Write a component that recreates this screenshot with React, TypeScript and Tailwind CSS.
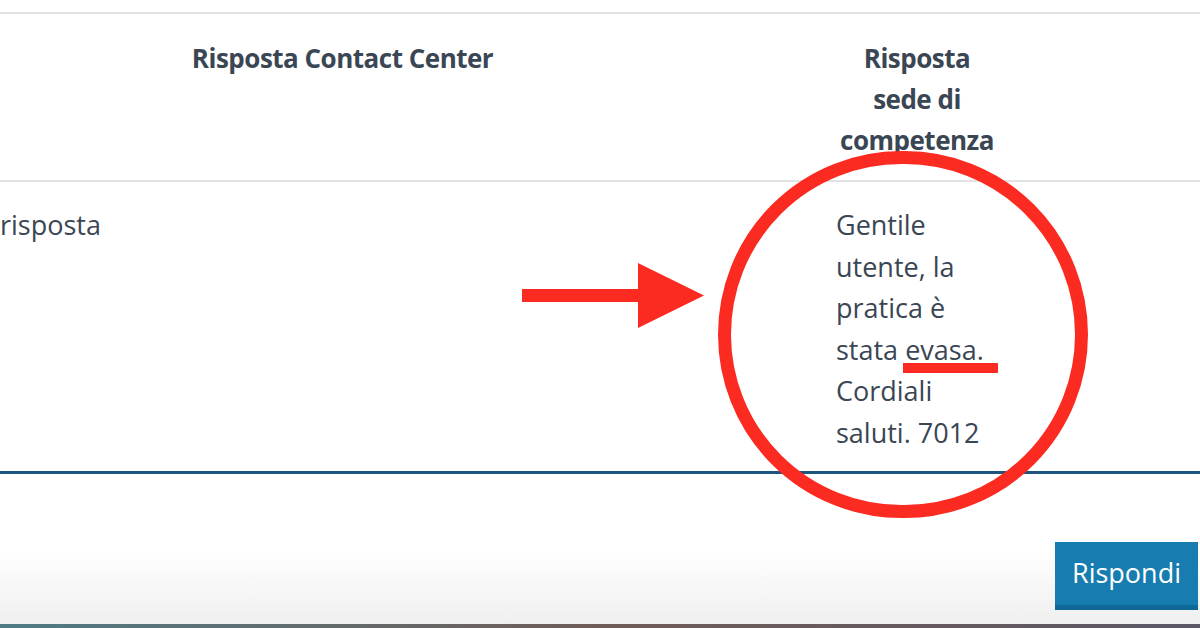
const bodyLines = ["Gentile", "utente, la", "pratica è", "stata evasa.", "Cordiali", "saluti. 7012"];

export default function App() {
  return (
    <div className="relative h-[628px] w-[1200px] overflow-hidden bg-white font-['Open_Sans',sans-serif] text-[#3a4653]">
      <div className="flex h-[624px] flex-col bg-gradient-to-b from-white from-[88%] to-[#efefef]">
        <div className="h-[12px]" />
        <div className="h-[2px] bg-[#e2e2e2]" />

        {/* header row */}
        <div className="flex h-[166px] pt-[24px] text-[26px] font-bold leading-[41px]">
          <div className="w-[685px] text-center tracking-[-0.5px]">Risposta Contact Center</div>
          <div className="ml-[151px] w-[162px] text-center tracking-[-0.5px]">
            Risposta
            <br />
            sede di
            <br />
            competenza
          </div>
        </div>
        <div className="h-[2px] bg-[#e2e2e2]" />

        {/* body row */}
        <div className="flex h-[289px] pt-[22px] text-[27px] leading-[41.5px]">
          <div className="w-[685px]">risposta</div>
          <div className="ml-[151px] w-[162px] whitespace-nowrap">
            {bodyLines.map((l) => (
              <div key={l}>{l}</div>
            ))}
          </div>
        </div>
        <div className="h-[3px] bg-[#1d5580]" />

        <div className="flex justify-end pt-[68px] pr-[2px]">
          <button className="h-[68px] w-[143px] border-b-[5px] border-[#0f6997] bg-[#177cb0] text-[27px] text-white">
            Rispondi
          </button>
        </div>
      </div>
      <div className="h-[4px] bg-gradient-to-r from-[#4d7b85] via-[#6f5c58] to-[#5c5865]" />

      {/* annotations */}
      <div className="absolute left-[718px] top-[151px] h-[367px] w-[370px] rounded-full border-[13px] border-[#fb2b21]" />
      <div className="absolute left-[903px] top-[363px] h-[10px] w-[95px] bg-[#fb2b21]" />
      <svg className="absolute left-[520px] top-[260px]" width="190" height="72" viewBox="0 0 190 72">
        <rect x="2" y="29" width="122" height="13" fill="#fb2b21" />
        <polygon points="118,3 184,35.5 118,68" fill="#fb2b21" />
      </svg>
    </div>
  );
}
